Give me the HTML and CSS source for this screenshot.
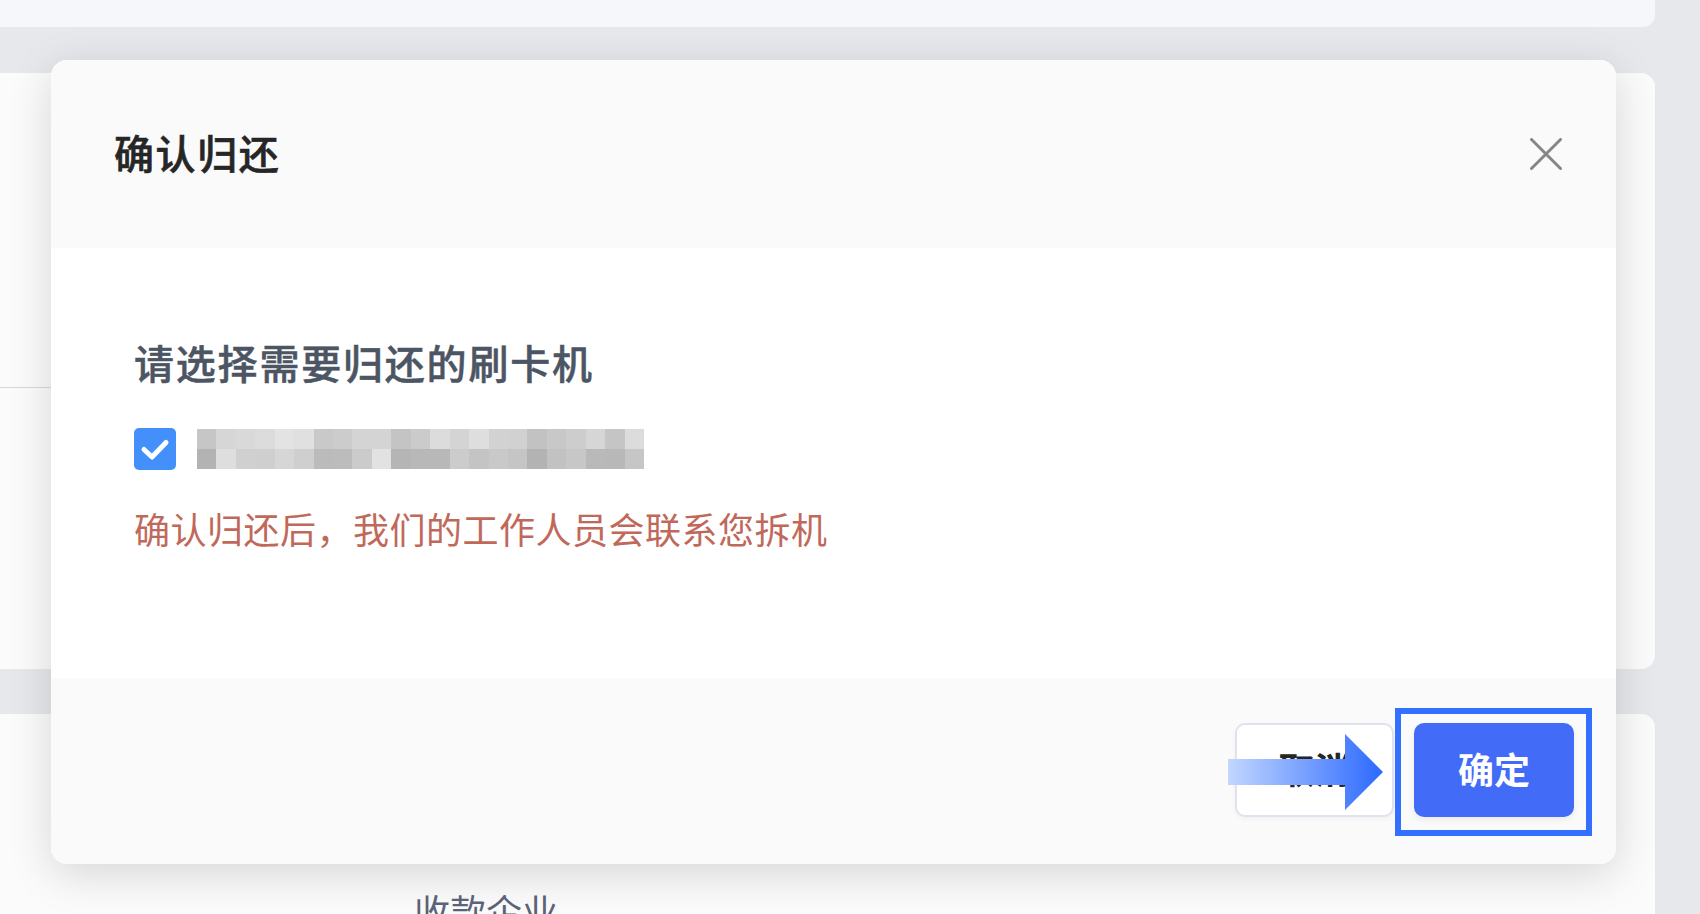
FILE: index.html
```html
<!DOCTYPE html>
<html lang="zh-CN">

<head>
  <meta charset="utf-8">
  <title>确认归还</title>
  <link rel="stylesheet" href="styles.css">
</head>

<body>
  <div class="page">
    <div class="card card-top"></div>
    <div class="card card-middle">
      <div class="card-line"></div>
    </div>
    <div class="card card-bottom">
      <span class="field-name">收款企业</span>
    </div>
  </div>

  <div class="modal">
    <div class="modal-header">
      <h2 class="modal-title">确认归还</h2>
      <svg class="close-icon" width="32" height="32" viewBox="0 0 32 32">
        <path d="M1.5 1.5 L30.5 30.5 M30.5 1.5 L1.5 30.5" stroke="#868686" stroke-width="3" stroke-linecap="round" fill="none" />
      </svg>
    </div>

    <div class="modal-body">
      <div class="select-title">请选择需要归还的刷卡机</div>
      <div class="device-row">
        <span class="checkbox">
          <svg width="42" height="42" viewBox="0 0 42 42">
            <path d="M10 21.5 L18 29 L32 14.5" stroke="#fff" stroke-width="5" stroke-linecap="round" stroke-linejoin="round" fill="none" />
          </svg>
        </span>
        <!-- blurred device name -->
        <svg class="mosaic" width="447" height="40" viewBox="0 0 23 2" preserveAspectRatio="none" shape-rendering="crispEdges">
          <rect x="0" y="0" width="1" height="1" fill="#c6c6c6" />
          <rect x="1" y="0" width="1" height="1" fill="#d6d6d6" />
          <rect x="2" y="0" width="1" height="1" fill="#d9d9d9" />
          <rect x="3" y="0" width="1" height="1" fill="#dcdcdc" />
          <rect x="4" y="0" width="1" height="1" fill="#e3e3e3" />
          <rect x="5" y="0" width="1" height="1" fill="#e0e0e0" />
          <rect x="6" y="0" width="1" height="1" fill="#c9c9c9" />
          <rect x="7" y="0" width="1" height="1" fill="#cccccc" />
          <rect x="8" y="0" width="1" height="1" fill="#d4d4d4" />
          <rect x="9" y="0" width="1" height="1" fill="#d4d4d4" />
          <rect x="10" y="0" width="1" height="1" fill="#c4c4c4" />
          <rect x="11" y="0" width="1" height="1" fill="#cbcbcb" />
          <rect x="12" y="0" width="1" height="1" fill="#dcdcdc" />
          <rect x="13" y="0" width="1" height="1" fill="#d4d4d4" />
          <rect x="14" y="0" width="1" height="1" fill="#dedede" />
          <rect x="15" y="0" width="1" height="1" fill="#d2d2d2" />
          <rect x="16" y="0" width="1" height="1" fill="#d1d1d1" />
          <rect x="17" y="0" width="1" height="1" fill="#c2c2c2" />
          <rect x="18" y="0" width="1" height="1" fill="#c8c8c8" />
          <rect x="19" y="0" width="1" height="1" fill="#cdcdcd" />
          <rect x="20" y="0" width="1" height="1" fill="#d6d6d6" />
          <rect x="21" y="0" width="1" height="1" fill="#c5c5c5" />
          <rect x="22" y="0" width="1" height="1" fill="#dcdcdc" />
          <rect x="0" y="1" width="1" height="1" fill="#b3b3b3" />
          <rect x="1" y="1" width="1" height="1" fill="#dedede" />
          <rect x="2" y="1" width="1" height="1" fill="#d0d0d0" />
          <rect x="3" y="1" width="1" height="1" fill="#cfcfcf" />
          <rect x="4" y="1" width="1" height="1" fill="#d6d6d6" />
          <rect x="5" y="1" width="1" height="1" fill="#cfcfcf" />
          <rect x="6" y="1" width="1" height="1" fill="#bbbbbb" />
          <rect x="7" y="1" width="1" height="1" fill="#bcbcbc" />
          <rect x="8" y="1" width="1" height="1" fill="#cbcbcb" />
          <rect x="9" y="1" width="1" height="1" fill="#e2e2e2" />
          <rect x="10" y="1" width="1" height="1" fill="#b5b5b5" />
          <rect x="11" y="1" width="1" height="1" fill="#b8b8b8" />
          <rect x="12" y="1" width="1" height="1" fill="#b8b8b8" />
          <rect x="13" y="1" width="1" height="1" fill="#cccccc" />
          <rect x="14" y="1" width="1" height="1" fill="#c4c4c4" />
          <rect x="15" y="1" width="1" height="1" fill="#c9c9c9" />
          <rect x="16" y="1" width="1" height="1" fill="#c5c5c5" />
          <rect x="17" y="1" width="1" height="1" fill="#b3b3b3" />
          <rect x="18" y="1" width="1" height="1" fill="#c2c2c2" />
          <rect x="19" y="1" width="1" height="1" fill="#c7c7c7" />
          <rect x="20" y="1" width="1" height="1" fill="#b9b9b9" />
          <rect x="21" y="1" width="1" height="1" fill="#b8b8b8" />
          <rect x="22" y="1" width="1" height="1" fill="#c6c6c6" />
        </svg>
      </div>
      <div class="notice">确认归还后&#65292;我们的工作人员会联系您拆机</div>
    </div>

    <div class="modal-footer">
      <button class="btn btn-cancel">取消</button>
      <div class="confirm-wrap">
        <button class="btn btn-confirm">确定</button>
        <div class="highlight"></div>
      </div>
      <svg class="arrow" width="155" height="76" viewBox="0 0 155 76">
        <defs>
          <linearGradient id="arrowFill" x1="0" y1="0" x2="1" y2="0">
            <stop offset="0" stop-color="#c2d6ff" />
            <stop offset="1" stop-color="#2b69ff" />
          </linearGradient>
        </defs>
        <path d="M0 25 H117 V0 L155 38 L117 76 V51 H0 Z" fill="url(#arrowFill)" />
      </svg>
    </div>
  </div>
</body>

</html>
```

FILE: styles.css
```css
body {
  margin: 0;
  height: 914px;
  overflow: hidden;
  background-color: #e7e8ec;
  font-family: "Noto Sans CJK SC", "Noto Sans", sans-serif;
}

.page {
  display: flex;
  flex-direction: column;
  height: 914px;
  padding-right: 45px;
  box-sizing: border-box;
}

.card {
  background-color: #fbfbfb;
}

.card-top {
  height: 27px;
  margin-bottom: 46px;
  background-color: #f5f7fb;
  border-radius: 0 0 12px 0;
}

.card-middle {
  height: 596px;
  margin-bottom: 45px;
  padding-top: 314px;
  box-sizing: border-box;
  border-radius: 0 14px 14px 0;
}

.card-line {
  width: 120px;
  height: 1px;
  background-color: #d6d8de;
}

.card-bottom {
  flex: 1;
  padding: 172px 0 0 414px;
  border-radius: 0 14px 0 0;
  overflow: hidden;
}

.field-name {
  font-size: 36px;
  line-height: 48px;
  color: #5b6478;
}

.modal {
  position: absolute;
  left: 51px;
  top: 60px;
  width: 1565px;
  height: 804px;
  display: flex;
  flex-direction: column;
  background-color: #fff;
  border-radius: 16px;
  box-shadow: 0 10px 44px rgba(0, 0, 0, 0.15);
  overflow: hidden;
}

.modal-header {
  height: 188px;
  flex-shrink: 0;
  display: flex;
  align-items: center;
  justify-content: space-between;
  padding: 0 54px 0 63px;
  background-color: #fafafa;
}

.modal-title {
  margin: 0 0 4px;
  font-size: 40px;
  line-height: 56px;
  font-weight: 500;
  -webkit-text-stroke: 0.6px #262626;
  letter-spacing: 1.6px;
  color: #262626;
}

.modal-body {
  flex: 1;
  padding: 90px 0 0 83px;
}

.select-title {
  font-size: 40px;
  line-height: 48px;
  font-weight: 500;
  -webkit-text-stroke: 0.5px #4b5563;
  letter-spacing: 1.8px;
  color: #4b5563;
}

.device-row {
  display: flex;
  align-items: center;
  gap: 21px;
  margin-top: 42px;
}

.checkbox {
  display: block;
  width: 42px;
  height: 42px;
  background-color: #4390fb;
  border-radius: 5px;
}

.checkbox svg,
.mosaic {
  display: block;
}

.notice {
  margin-top: 34px;
  font-size: 36px;
  line-height: 48px;
  letter-spacing: 0.5px;
  color: #c0695a;
}

.modal-footer {
  position: relative;
  height: 186px;
  flex-shrink: 0;
  display: flex;
  align-items: flex-start;
  justify-content: flex-end;
  gap: 20px;
  padding: 45px 42px 0 0;
  box-sizing: border-box;
  background-color: #fafafa;
}

.btn {
  width: 160px;
  height: 94px;
  padding: 0 0 4px;
  border-radius: 10px;
  font-family: inherit;
  font-size: 36px;
  font-weight: 700;
  box-sizing: border-box;
}

.btn-cancel {
  width: 159px;
  background-color: #fff;
  border: 2px solid #e0e3ef;
  color: #262626;
  box-shadow: 0 2px 4px rgba(0, 0, 0, 0.04);
}

.btn-confirm {
  display: block;
  background-color: #426cf8;
  border: none;
  color: #fff;
  box-shadow: 0 3px 6px rgba(0, 0, 0, 0.06);
}

.confirm-wrap {
  position: relative;
}

/* annotation box and arrow drawn on top of the screenshot */
.highlight {
  position: absolute;
  top: -15px;
  left: -19px;
  right: -18px;
  bottom: -19px;
  border: 6px solid #3370ff;
}

.arrow {
  position: absolute;
  left: 1177px;
  top: 56px;
}
```
